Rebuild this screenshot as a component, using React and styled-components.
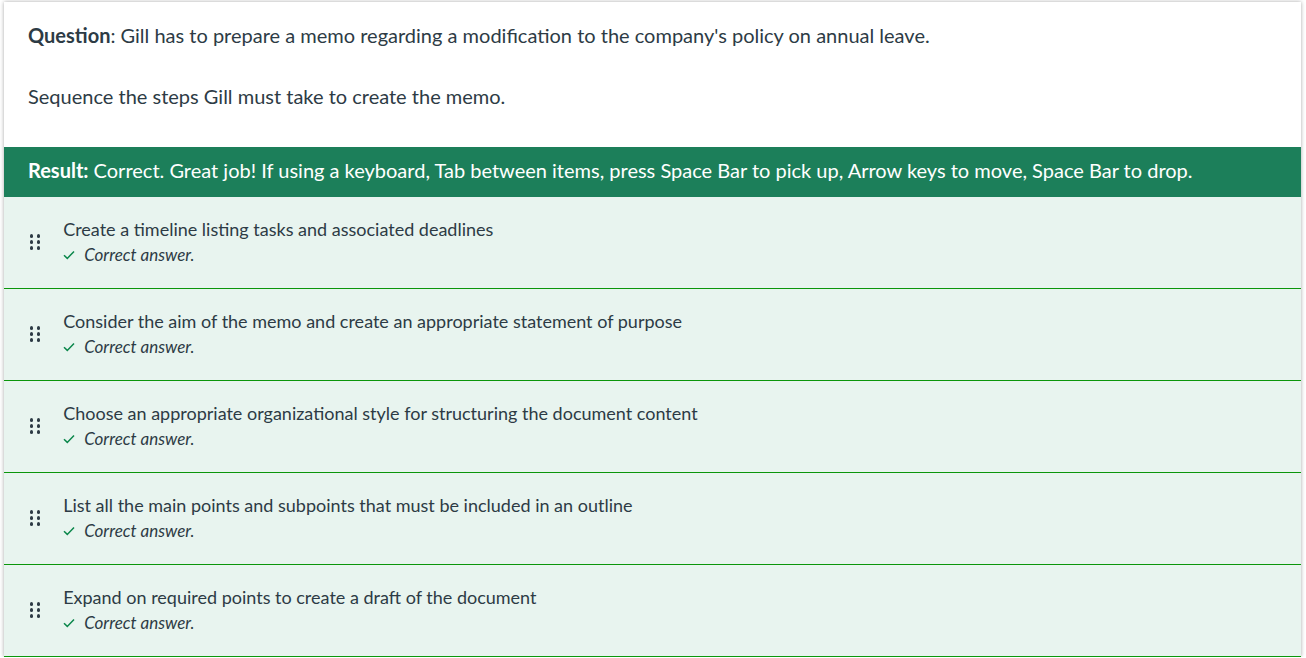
import React from 'react';
import styled, { createGlobalStyle } from 'styled-components';

const GlobalStyle = createGlobalStyle`
  html, body {
    margin: 0;
    padding: 0;
    background: #ffffff;
  }
  body {
    font-family: Lato, "Noto Sans", "Liberation Sans", sans-serif;
    color: #2d3b45;
    overflow: hidden;
  }
`;

const Page = styled.div`
  padding: 2px 5px 0 4px;
`;

const Card = styled.div`
  background: #ffffff;
  box-shadow: 0 0 4px rgba(0, 0, 0, 0.35);
`;

const Prompt = styled.div`
  padding: 20px 24px 37px;
  font-size: 20px;
  line-height: 27px;
`;

const Para = styled.p`
  margin: ${(p) => (p.$first ? '0' : '34px 0 0')};
`;

const ResultBar = styled.div`
  background: #1c7f5a;
  color: #ffffff;
  padding: 10px 24px 14px;
  font-size: 20px;
  line-height: 26px;
`;

const List = styled.ul`
  list-style: none;
  margin: 0;
  padding: 0;
`;

const Item = styled.li`
  display: flex;
  align-items: center;
  background: #e8f4ef;
  border-bottom: 1px solid #0b960b;
  padding: 20px 24px 23px 26px;
`;

const Handle = styled.span`
  display: grid;
  grid-template-columns: repeat(2, 3.2px);
  grid-auto-rows: 3.2px;
  column-gap: 3.8px;
  row-gap: 2.8px;
  margin-right: 23px;
  margin-top: 2px;
`;

const Dot = styled.i`
  display: block;
  width: 3.2px;
  height: 3.2px;
  border-radius: 50%;
  background: #2d3b45;
`;

const Body = styled.div`
  display: flex;
  flex-direction: column;
`;

const Label = styled.div`
  font-size: 18px;
  line-height: 24px;
`;

const Feedback = styled.div`
  display: flex;
  align-items: center;
  gap: 9px;
  margin-top: 4px;
  font-size: 17px;
  line-height: 20px;
  font-style: italic;
`;

const Check = () => (
  <svg width="12" height="10" viewBox="0 0 12 10" fill="none">
    <path d="M1 5.2 L4.3 8.4 L11 1.4" stroke="#0b874b" strokeWidth="1.5" />
  </svg>
);

const steps = [
  'Create a timeline listing tasks and associated deadlines',
  'Consider the aim of the memo and create an appropriate statement of purpose',
  'Choose an appropriate organizational style for structuring the document content',
  'List all the main points and subpoints that must be included in an outline',
  'Expand on required points to create a draft of the document',
];

const App = () => {
  return (
    <Page>
      <GlobalStyle />
      <Card>
        <Prompt>
          <Para $first>
            <strong>Question</strong>: Gill has to prepare a memo regarding a modification to the company's policy on annual leave.
          </Para>
          <Para>Sequence the steps Gill must take to create the memo.</Para>
        </Prompt>
        <ResultBar>
          <strong>Result:</strong> Correct. Great job! If using a keyboard, Tab between items, press Space Bar to pick up, Arrow keys to move, Space Bar to drop.
        </ResultBar>
        <List>
          {steps.map((s) => (
            <Item key={s}>
              <Handle>
                {[0, 1, 2, 3, 4, 5].map((i) => (
                  <Dot key={i} />
                ))}
              </Handle>
              <Body>
                <Label>{s}</Label>
                <Feedback>
                  <Check />
                  Correct answer.
                </Feedback>
              </Body>
            </Item>
          ))}
        </List>
      </Card>
    </Page>
  );
};

export default App;
